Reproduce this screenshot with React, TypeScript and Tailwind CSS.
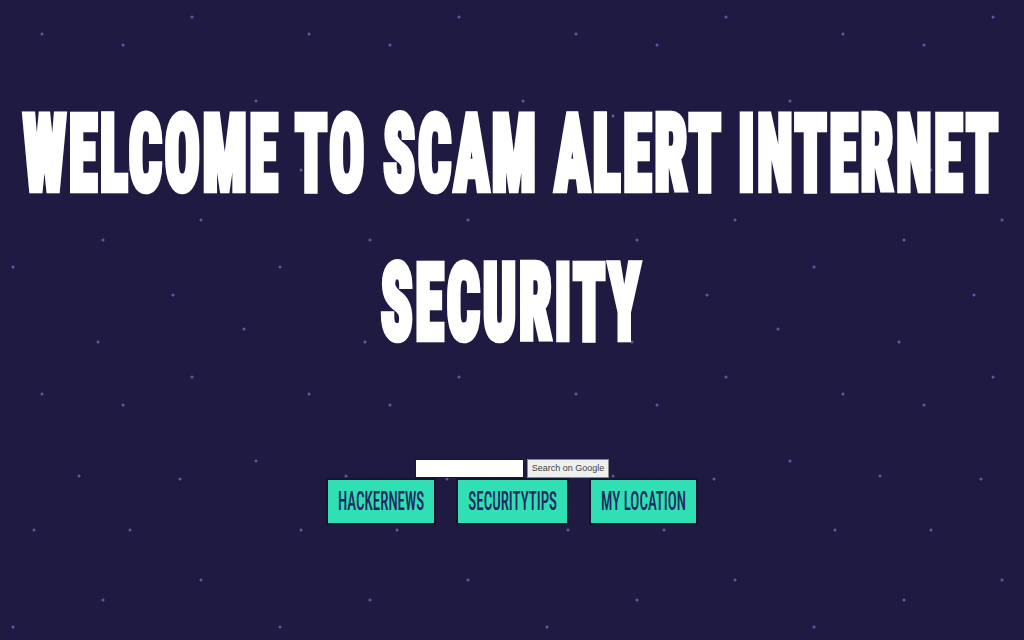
const stars: [number, number][] = [
  [42, 34], [123, 45], [192, 17], [256, 101], [79, 116], [180, 119], [34, 170],
  [130, 170], [201, 220], [103, 240], [13, 267], [173, 295], [244, 329], [98, 342],
];

function StarField() {
  return (
    <svg className="pointer-events-none absolute inset-0 h-full w-full" aria-hidden="true">
      <defs>
        <pattern id="stars" width="267" height="360" patternUnits="userSpaceOnUse">
          {stars.map(([x, y]) => (
            <circle key={`${x}-${y}`} cx={x} cy={y} r="1.5" fill="#6a61b8" opacity="0.85" />
          ))}
        </pattern>
      </defs>
      <rect width="100%" height="100%" fill="url(#stars)" />
    </svg>
  );
}

const links = ["HACKERNEWS", "SECURITYTIPS", "MY LOCATION"];

export default function App() {
  return (
    <div className="relative h-[640px] w-full overflow-hidden bg-[#1e1a42] font-['Roboto_Condensed','Liberation_Sans',sans-serif]">
      <StarField />
      <main className="relative flex flex-col items-center">
        <h1 className="mt-[146px] scale-y-[1.82] whitespace-nowrap text-center text-[58px] leading-[82px] font-black tracking-[2.8px] text-white [-webkit-text-stroke:3.6px_white]">
          WELCOME TO SCAM ALERT INTERNET
          <br />
          SECURITY
        </h1>

        <form className="mt-[149px] flex items-stretch gap-[3px]" onSubmit={(e) => e.preventDefault()}>
          <input
            type="text"
            className="h-[19px] w-[109px] border border-[#1a1733] bg-white px-1 text-[10px] outline-none"
          />
          <button
            type="submit"
            className="h-[19px] w-[82px] border border-[#8a8a8a] bg-[#efefef] text-[9px] text-[#444] font-['Liberation_Sans',sans-serif]"
          >
            Search on Google
          </button>
        </form>

        <nav className="flex gap-[20px]">
          {links.map((label) => (
            <a
              key={label}
              href="#"
              className="flex h-[47px] items-center justify-center border-2 border-[#15122f] bg-[#31dfb5] px-[10px]"
            >
              <span className="inline-block scale-y-[1.75] text-[15px] font-medium text-[#1d2b5e]">{label}</span>
            </a>
          ))}
        </nav>
      </main>
    </div>
  );
}
